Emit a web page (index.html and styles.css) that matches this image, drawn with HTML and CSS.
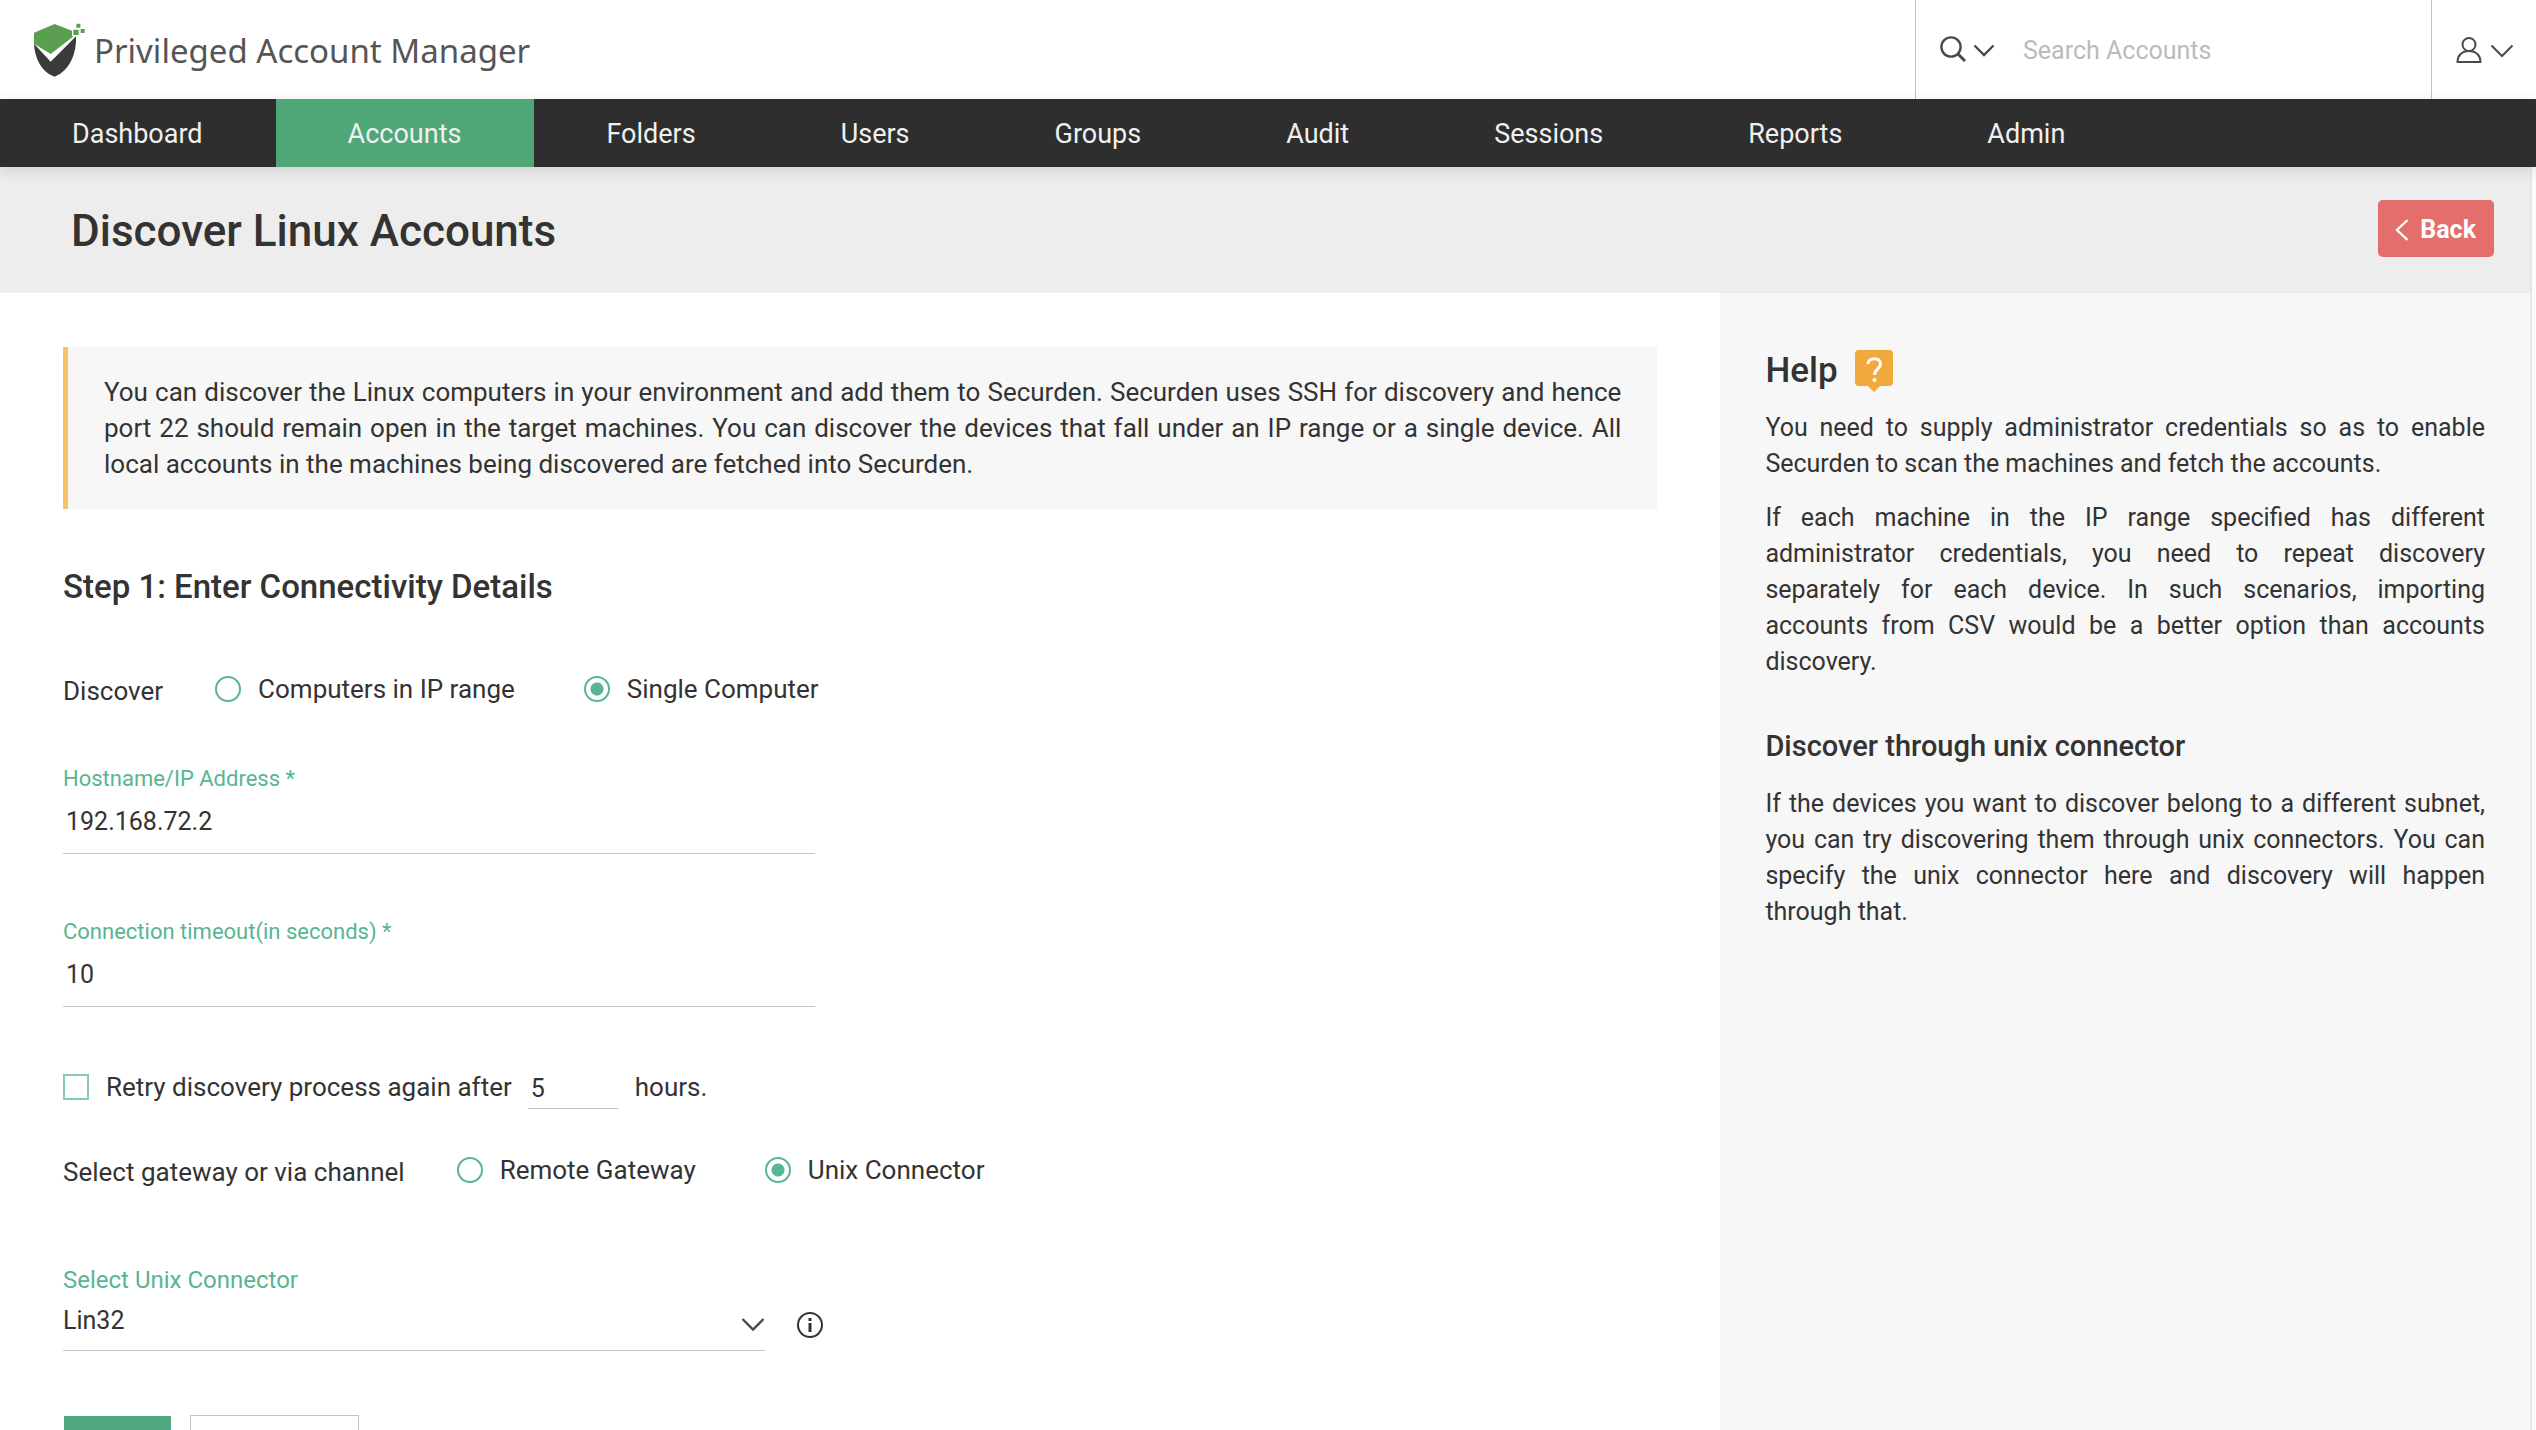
FILE: index.html
```html
<!DOCTYPE html>
<html lang="en">
<head>
  <meta charset="utf-8">
  <meta name="viewport" content="width=device-width, initial-scale=1">
  <title>Discover Linux Accounts - Privileged Account Manager</title>
  <link rel="stylesheet" href="styles.css">
</head>
<body>
  <header class="topbar">
    <a class="brand" href="#">
      <svg class="brand-mark" viewBox="41 33 156 165" aria-hidden="true">
        <path fill="#5a9e50" d="M41 65 L103 39 L155 59 V75 L160 76 L91 129 L41 98 Z"/>
        <path fill="#3b3b3b" d="M41 98 L91 152 L167 76 C169 122 152 178 103 197 C58 180 43 134 41 98 Z"/>
        <path fill="#5a9e50" d="M168 38h12v12h-12z M181 54h12v12h-12z M159 56h16v16h-16z"/>
      </svg>
      <span class="brand-name">Privileged Account Manager</span>
    </a>
    <form class="search" role="search">
      <button class="icon-button search-scope" type="button" aria-label="Search scope">
        <svg width="28" height="28" viewBox="0 0 28 28" aria-hidden="true"><circle cx="11" cy="11" r="9.6"/><path d="M18 18 L25 25" stroke-width="3"/></svg>
        <svg width="22" height="22" viewBox="0 0 22 22" aria-hidden="true"><path d="M1.500 6.500 L11 16 L20.500 6.500"/></svg>
      </button>
      <input class="search-input" type="text" placeholder="Search Accounts" aria-label="Search Accounts">
    </form>
    <button class="icon-button user-menu" type="button" aria-label="User menu">
      <svg width="26" height="26" viewBox="0 0 26 26" aria-hidden="true"><circle cx="13" cy="7.500" r="6.500"/><path d="M1.500 25 C1.500 18.500 6 14 13 14 C20 14 24.500 18.500 24.500 25 Z"/></svg>
      <svg width="24" height="24" viewBox="0 0 24 24" aria-hidden="true"><path d="M1.500 7.500 L12 18 L22.500 7.500"/></svg>
    </button>
  </header>

  <nav class="main-nav">
    <a href="#">Dashboard</a>
    <a class="active" href="#" aria-current="page">Accounts</a>
    <a href="#">Folders</a>
    <a href="#">Users</a>
    <a href="#">Groups</a>
    <a href="#">Audit</a>
    <a href="#">Sessions</a>
    <a href="#">Reports</a>
    <a href="#">Admin</a>
  </nav>

  <div class="viewport">
    <div class="page">
      <div class="page-head">
        <h1>Discover Linux Accounts</h1>
        <button class="back" type="button">
          <svg width="14" height="22" viewBox="0 0 14 22" aria-hidden="true"><path d="M12.500 1 L2 11 L12.500 21"/></svg>
          Back
        </button>
      </div>

      <div class="columns">
        <main class="content">
          <p class="note">You can discover the Linux computers in your environment and add them to Securden. Securden uses SSH for discovery and hence port 22 should remain open in the target machines. You can discover the devices that fall under an IP range or a single device. All local accounts in the machines being discovered are fetched into Securden.</p>

          <form class="discover-form">
            <h2>Step 1: Enter Connectivity Details</h2>

            <div class="choice-row discover-row" role="radiogroup" aria-labelledby="discover-label">
              <span class="choice-title" id="discover-label">Discover</span>
              <label class="choice"><input type="radio" name="discover">Computers in IP range</label>
              <label class="choice"><input type="radio" name="discover" checked>Single Computer</label>
            </div>

            <div class="field host-field">
              <label for="host">Hostname/IP Address *</label>
              <input id="host" type="text" value="192.168.72.2">
            </div>

            <div class="field">
              <label for="timeout">Connection timeout(in seconds) *</label>
              <input id="timeout" type="text" value="10">
            </div>

            <div class="retry-row">
              <label class="choice"><input type="checkbox">Retry discovery process again after</label>
              <input class="hours" id="hours" type="text" value="5">
              <label for="hours">hours.</label>
            </div>

            <div class="choice-row gateway-row" role="radiogroup" aria-labelledby="gateway-label">
              <span class="choice-title" id="gateway-label">Select gateway or via channel</span>
              <label class="choice"><input type="radio" name="gateway">Remote Gateway</label>
              <label class="choice"><input type="radio" name="gateway" checked>Unix Connector</label>
            </div>

            <div class="connector">
              <label for="connector">Select Unix Connector</label>
              <div class="connector-row">
                <div class="select-wrap">
                  <select id="connector"><option>Lin32</option></select>
                  <svg class="caret" width="24" height="24" viewBox="0 0 24 24" aria-hidden="true"><path d="M1.500 7 L12 17.500 L22.500 7"/></svg>
                </div>
                <button class="icon-button info" type="button" aria-label="Connector information">
                  <svg width="28" height="28" viewBox="0 0 28 28" aria-hidden="true"><circle cx="14" cy="14" r="12"/><path d="M14 12 V21" stroke-width="3"/><path d="M14 7 V10" stroke-width="3"/></svg>
                </button>
              </div>
            </div>

            <div class="actions">
              <button class="primary" type="submit" aria-label="Next"></button>
              <button class="secondary" type="button" aria-label="Cancel"></button>
            </div>
          </form>
        </main>

        <aside class="help">
          <h2>Help
            <svg width="38" height="42" viewBox="0 0 38 42" aria-hidden="true"><path fill="#f2a93b" d="M4 0h30a4 4 0 0 1 4 4v28a4 4 0 0 1-4 4h-9l-6 6-6-6H4a4 4 0 0 1-4-4V4a4 4 0 0 1 4-4z"/><path fill="none" stroke="#fff" stroke-width="3" d="M13 14c0-7 12.500-7 12.500 0 0 5-6 5-6 11"/><circle cx="19.500" cy="30" r="2" fill="#fff"/></svg>
          </h2>
          <p>You need to supply administrator credentials so as to enable Securden to scan the machines and fetch the accounts.</p>
          <p>If each machine in the IP range specified has different administrator credentials, you need to repeat discovery separately for each device. In such scenarios, importing accounts from CSV would be a better option than accounts discovery.</p>
          <h3>Discover through unix connector</h3>
          <p>If the devices you want to discover belong to a different subnet, you can try discovering them through unix connectors. You can specify the unix connector here and discovery will happen through that.</p>
        </aside>
      </div>
    </div>
    <div class="scroll-track"></div>
  </div>
</body>
</html>
```
FILE: styles.css
```css
* { box-sizing: border-box; }

body {
  display: flex;
  flex-direction: column;
  height: 100vh;
  margin: 0;
  overflow: hidden;
  background: #fff;
  color: #333;
  font: 26px/36px Roboto, "Liberation Sans", sans-serif;
}

h1, h2, h3, p { margin: 0; }

h1, h2, h3 { font-weight: 500; }

button, input, select { color: inherit; font-family: inherit; }

svg { flex: none; }

/* Top bar */
.topbar {
  display: flex;
  flex: none;
  height: 99px;
}

.brand {
  display: flex;
  align-items: center;
  gap: 8px;
  margin-right: auto;
  padding-left: 34px;
  color: #555;
  text-decoration: none;
}

.brand-mark { width: 52px; height: 55px; }

.brand-name {
  padding-top: 2px;
  font: 400 33px/48px "Noto Sans", "Open Sans", sans-serif;
}

.icon-button {
  display: flex;
  align-items: center;
  padding: 0;
  border: 0;
  background: none;
}

.icon-button svg, .caret {
  fill: none;
  stroke: #4a4a4a;
  stroke-width: 2.4;
}

.search {
  display: flex;
  width: 516px;
  border-left: 1px solid #c4c4c4;
}

.search-scope { gap: 5px; padding-left: 24px; }

.search-input {
  flex: 1;
  min-width: 0;
  padding: 2px 0 0 28px;
  border: 0;
  outline: 0;
  background: none;
  font-size: 25px;
}

.search-input::placeholder { color: #bbb; opacity: 1; }

.user-menu {
  gap: 8px;
  width: 105px;
  padding-left: 24px;
  border-left: 1px solid #c4c4c4;
}

.icon-button.user-menu svg { stroke-width: 2; }

/* Navigation */
.main-nav {
  position: relative;
  z-index: 1;
  display: flex;
  flex: none;
  background: #2e2e2e;
  box-shadow: 0 4px 14px rgba(0, 0, 0, .12);
}

.main-nav a {
  padding: 17px 73px 15px 72px;
  color: #f0f0f0;
  font-size: 27px;
  text-decoration: none;
}

.main-nav .active { background: #4fa777; }

/* Scrolling area */
.viewport {
  display: flex;
  flex: 1;
  min-height: 0;
}

.page {
  display: flex;
  flex: 1;
  flex-direction: column;
  min-width: 0;
  overflow-y: auto;
  scrollbar-width: none;
}

.scroll-track {
  width: 6px;
  border-left: 2px solid #e6e6e6;
  background: #fafafa;
}

.page-head {
  display: flex;
  flex: none;
  align-items: flex-start;
  justify-content: space-between;
  height: 126px;
  padding: 33px 36px 0 71px;
  background: #ededed;
}

.page-head h1 { font-size: 44px; line-height: 62px; }

.back {
  display: flex;
  align-items: center;
  gap: 11px;
  height: 57px;
  padding: 2px 18px 0 17px;
  border: 0;
  border-radius: 5px;
  background: #e36e6b;
  color: #fff;
  font-size: 25px;
  font-weight: 700;
}

.back svg { fill: none; stroke: #fff; stroke-width: 2.4; }

.columns { display: flex; flex: 1 0 auto; }

.content { flex: 1; min-width: 0; padding: 54px 63px; }

.note {
  padding: 27px 36px;
  border-left: 5px solid #f7c265;
  background: #f7f7f7;
  text-align: justify;
}

/* Form */
.discover-form h2 {
  margin-top: 58px;
  font-size: 33px;
  line-height: 40px;
}

.choice-row { display: flex; height: 40px; }

.choice-title { line-height: 40px; }

.discover-row { margin-top: 64px; }

.choice {
  display: flex;
  align-items: center;
  height: 36px;
}

.choice-row .choice { margin-left: 52px; }

.choice-row .choice + .choice { margin-left: 69px; }

.choice input {
  flex: none;
  width: 26px;
  height: 26px;
  margin: 0 17px 0 0;
  border: 2px solid #58b592;
  appearance: none;
  background: #fff;
}

.choice input[type="radio"] { border-radius: 50%; }

.choice input[type="radio"]:checked {
  background: radial-gradient(circle, #58b592 6px, #fff 7px);
}

.choice input[type="checkbox"] { border-color: #84ccb2; }

.field { max-width: 752px; margin-top: 64px; }

.host-field { margin-top: 54px; }

.field label, .connector label {
  display: block;
  color: #58b592;
  font-size: 22px;
  line-height: 28px;
}

.connector label { font-size: 24px; }

.field input, .hours, .connector select {
  width: 100%;
  border: 0;
  border-bottom: 1px solid #c4c4c4;
  border-radius: 0;
  outline: 0;
  background: none;
  font-size: 25px;
}

.field input { height: 61px; padding: 0 3px 4px; }

.retry-row { display: flex; height: 40px; margin-top: 62px; }

.retry-row .hours {
  width: 90px;
  height: 40px;
  margin: 0 17px 0 16px;
  padding: 0 3px;
}

.gateway-row { margin-top: 43px; }

.connector { margin-top: 74px; }

.connector-row {
  display: flex;
  align-items: center;
  gap: 31px;
}

.select-wrap {
  position: relative;
  width: 100%;
  max-width: 702px;
}

.connector select {
  display: block;
  height: 57px;
  padding: 0 0 3px;
  appearance: none;
}

.caret {
  position: absolute;
  top: 18px;
  right: 0;
  pointer-events: none;
}

.info { padding-top: 4px; }

.icon-button.info svg { stroke: #333; stroke-width: 2; }

.actions { display: flex; gap: 18px; margin-top: 64px; }

.actions button { height: 64px; }

.primary {
  width: 109px;
  border: 1px solid transparent;
  background: #4fa882 padding-box;
}

.secondary {
  width: 169px;
  border: 1px solid #c4c4c4;
  background: #fff;
}

/* Help panel */
.help {
  flex: 0 0 32%;
  padding: 57px 45px 57px 45px;
  background: #f7f7f7;
  font-size: 25px;
}

.help h2 {
  display: flex;
  gap: 17px;
  font-size: 35px;
  line-height: 42px;
}

.help p { margin-top: 18px; text-align: justify; }

.help h3 {
  margin-top: 48px;
  font-size: 29px;
  line-height: 36px;
}

.help h3 + p { margin-top: 22px; }
```
